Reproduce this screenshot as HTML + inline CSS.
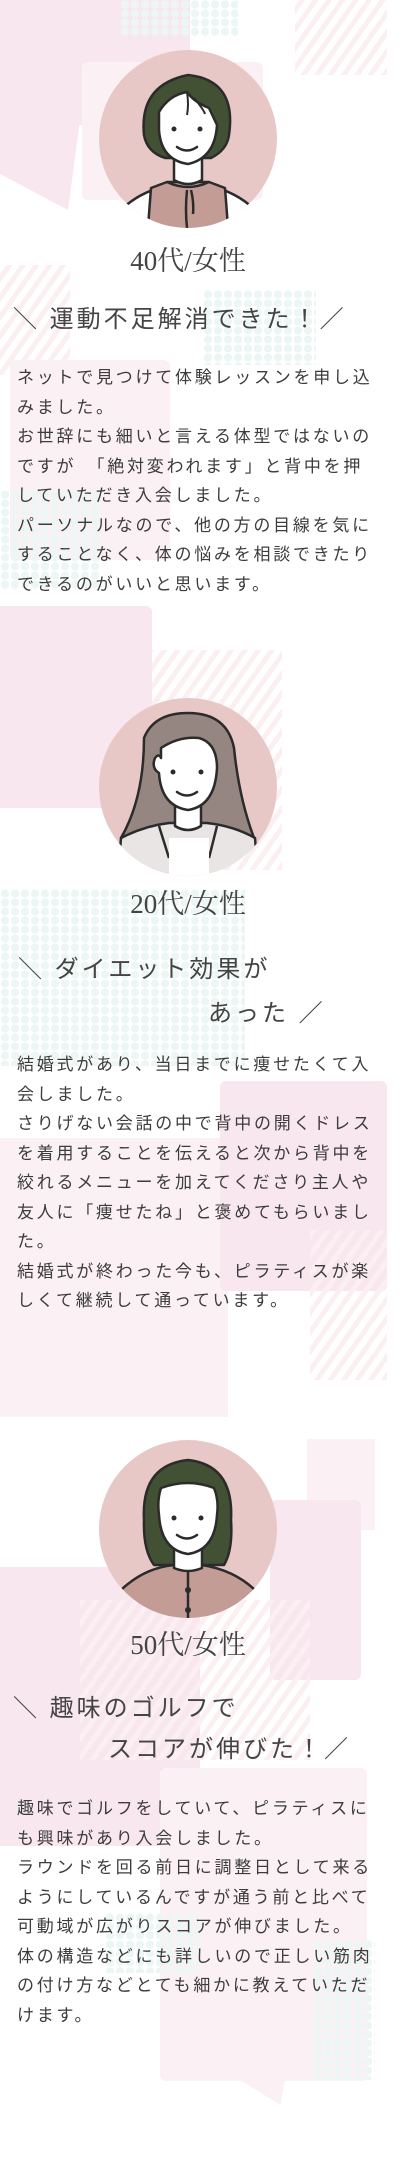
<!DOCTYPE html>
<html lang="ja"><head><meta charset="utf-8">
<style>
html,body{margin:0;padding:0}
body{width:403px;height:2167px;position:relative;overflow:hidden;background:#fff;font-family:"Liberation Sans","Noto Sans CJK JP",sans-serif;color:#444}
.bg{position:absolute}
.pk{background:#f8e7ee}
.pl{background:#fbf0f3}
.dots{background-image:radial-gradient(circle,#ecf7f5 60%,transparent 62%);background-size:10px 9px}
.stripes{background:repeating-linear-gradient(-55deg,#fbeff2 0 5px,transparent 5px 11px)}
.av{position:absolute;left:99px;width:178px;height:178px}
.lab{position:absolute;left:0;width:376px;text-align:center;font-family:"Liberation Serif","Noto Serif CJK JP",serif;font-size:27px;color:#444;line-height:30px}
.h{position:absolute;font-size:24px;letter-spacing:3px;line-height:30px;color:#444;white-space:nowrap}
.b{position:absolute;left:17px;width:362px;font-size:17px;letter-spacing:2.75px;line-height:29.5px;color:#3c3c3c}
</style></head><body>
<div class="bg pk" style="left:0;top:0;width:190px;height:125px"></div>
<div class="bg pk" style="left:0;top:120px;width:80px;height:90px;clip-path:polygon(0 0,100% 0,85% 100%,0 60%)"></div>
<div class="bg dots" style="left:120px;top:0;width:118px;height:37px"></div>
<div class="bg stripes" style="left:295px;top:0;width:92px;height:75px"></div>
<div class="bg pl" style="left:82px;top:62px;width:181px;height:138px;border-radius:6px"></div>
<div class="bg dots" style="left:203px;top:290px;width:113px;height:75px"></div>
<div class="bg stripes" style="left:0;top:265px;width:70px;height:110px"></div>
<div class="bg pl" style="left:10px;top:360px;width:160px;height:200px;border-radius:6px"></div>
<div class="bg dots" style="left:0;top:490px;width:100px;height:100px"></div>
<div class="bg pk" style="left:0;top:606px;width:152px;height:202px;border-radius:0 6px 0 0"></div>
<div class="bg stripes" style="left:152px;top:650px;width:130px;height:220px"></div>
<div class="bg dots" style="left:0;top:889px;width:245px;height:177px"></div>
<div class="bg pl" style="left:0;top:1138px;width:228px;height:279px"></div>
<div class="bg pk" style="left:220px;top:1081px;width:167px;height:210px;border-radius:6px"></div>
<div class="bg stripes" style="left:310px;top:1230px;width:77px;height:150px"></div>
<div class="bg pl" style="left:307px;top:1439px;width:68px;height:91px"></div>
<div class="bg pk" style="left:270px;top:1500px;width:91px;height:180px;border-radius:6px"></div>
<div class="bg pk" style="left:0;top:1567px;width:200px;height:279px"></div>
<div class="bg stripes" style="left:80px;top:1600px;width:230px;height:160px"></div>
<div class="bg pl" style="left:160px;top:1768px;width:207px;height:313px;border-radius:6px"></div>
<div class="bg pl" style="left:240px;top:2080px;width:45px;height:25px;clip-path:polygon(0 0,100% 0,90% 100%)"></div>
<div class="bg dots" style="left:313px;top:1940px;width:62px;height:140px"></div>
<div class="bg dots" style="left:105px;top:1913px;width:95px;height:60px"></div>

<svg class="av" style="top:50px" viewBox="0 0 178 178">
<defs><clipPath id="c1"><circle cx="89" cy="89" r="89"/></clipPath></defs>
<circle cx="89" cy="89" r="89" fill="#e8c8c6"/>
<g clip-path="url(#c1)" stroke="#2b2b2b" stroke-width="2.5" stroke-linejoin="round">
<path d="M22 160 Q40 142 70 135 L108 135 Q138 142 156 160 L160 190 L18 190Z" fill="#fff"/>
<path d="M52 138 L68 132 L110 132 L126 138 L130 190 L48 190Z" fill="#c29c95"/>
<path d="M68 132 Q89 142 110 132" fill="none"/>
<path d="M88 140 Q86 160 88 178 M92 140 Q95 152 94 164" fill="none"/>
<path d="M75 104 L75 130 Q89 138 103 130 L103 104Z" fill="#fff"/>
<path d="M45 85 Q40 35 89 25 Q138 30 130 85 Q128 100 112 108 L66 108 Q48 102 45 85Z" fill="#425033"/>
<path d="M60 62 Q70 45 88 42 Q95 52 110 58 L118 75 Q116 108 89 114 Q62 110 60 80Z" fill="#fff"/>
<path d="M88 42 Q90 55 88 65 M95 48 Q105 60 106 64" fill="none" stroke-width="2"/>
</g>
<circle cx="75" cy="79" r="2.5" fill="#2b2b2b"/><circle cx="101" cy="79" r="2.5" fill="#2b2b2b"/>
<path d="M78 97 Q88 104 98 97" fill="none" stroke="#2b2b2b" stroke-width="2.5" stroke-linecap="round"/>
</svg>
<div class="lab" style="top:246px">40代/女性</div>
<div class="h" style="left:13px;top:305px">＼ 運動不足解消できた！／</div>
<div class="b" style="top:363px">ネットで見つけて体験レッスンを申し込みました。<br>お世辞にも細いと言える体型ではないのですが　「絶対変われます」と背中を押していただき入会しました。<br>パーソナルなので、他の方の目線を気にすることなく、体の悩みを相談できたりできるのがいいと思います。</div>

<svg class="av" style="top:698px" viewBox="0 0 178 178">
<defs><clipPath id="c2"><circle cx="89" cy="89" r="89"/></clipPath></defs>
<circle cx="89" cy="89" r="89" fill="#e8c8c6"/>
<g clip-path="url(#c2)" stroke="#2b2b2b" stroke-width="2.5" stroke-linejoin="round">
<path d="M45 40 Q55 15 89 15 Q128 15 135 50 Q140 100 155 140 L130 150 L50 150 L22 140 Q45 100 45 40Z" fill="#958682"/>
<path d="M22 140 Q45 128 70 125 L108 125 Q135 128 156 140 L160 190 L18 190Z" fill="#e8e5e4"/>
<path d="M60 128 L70 160 M118 128 L110 160" fill="none"/>
<path d="M70 140 L110 140 L110 190 L70 190Z" fill="#fff" stroke="none"/>
<path d="M76 100 L76 128 Q89 136 102 128 L102 100Z" fill="#fff"/>
<path d="M62 50 Q80 38 100 40 Q118 45 118 70 Q116 108 89 112 Q62 108 60 75 Q52 70 56 60 Q60 55 62 60Z" fill="#fff"/>
</g>
<circle cx="74" cy="74" r="2.5" fill="#2b2b2b"/><circle cx="102" cy="74" r="2.5" fill="#2b2b2b"/>
<path d="M78 94 Q88 101 98 94" fill="none" stroke="#2b2b2b" stroke-width="2.5" stroke-linecap="round"/>
</svg>
<div class="lab" style="top:889px">20代/女性</div>
<div class="h" style="left:18px;top:955px">＼ ダイエット効果が</div>
<div class="h" style="left:208px;top:999px">あった ／</div>
<div class="b" style="top:1050px">結婚式があり、当日までに痩せたくて入会しました。<br>さりげない会話の中で背中の開くドレスを着用することを伝えると次から背中を絞れるメニューを加えてくださり主人や友人に「痩せたね」と褒めてもらいました。<br>結婚式が終わった今も、ピラティスが楽しくて継続して通っています。</div>

<svg class="av" style="top:1440px" viewBox="0 0 178 178">
<defs><clipPath id="c3"><circle cx="89" cy="89" r="89"/></clipPath></defs>
<circle cx="89" cy="89" r="89" fill="#e8c8c6"/>
<g clip-path="url(#c3)" stroke="#2b2b2b" stroke-width="2.5" stroke-linejoin="round">
<path d="M45 80 Q42 25 89 20 Q135 25 132 80 Q134 110 125 125 L55 125 Q44 110 45 80Z" fill="#425033"/>
<path d="M22 150 Q45 128 75 125 L103 125 Q135 130 156 150 L160 190 L18 190Z" fill="#c29c95"/>
<path d="M89 128 L89 190" fill="none"/>
<path d="M75 102 L75 128 Q89 134 103 128 L103 102Z" fill="#fff"/>
<path d="M62 48 Q89 38 115 48 Q120 60 118 75 Q116 110 89 114 Q62 110 60 75 Q58 60 62 48Z" fill="#fff"/>
</g>
<circle cx="89" cy="150" r="3" fill="#2b2b2b"/><circle cx="89" cy="170" r="3" fill="#2b2b2b"/>
<circle cx="75" cy="78" r="2.5" fill="#2b2b2b"/><circle cx="102" cy="78" r="2.5" fill="#2b2b2b"/>
<path d="M78 95 Q88 102 98 95" fill="none" stroke="#2b2b2b" stroke-width="2.5" stroke-linecap="round"/>
</svg>
<div class="lab" style="top:1630px">50代/女性</div>
<div class="h" style="left:13px;top:1694px">＼ 趣味のゴルフで</div>
<div class="h" style="left:108px;top:1735px">スコアが伸びた！／</div>
<div class="b" style="top:1794px">趣味でゴルフをしていて、ピラティスにも興味があり入会しました。<br>ラウンドを回る前日に調整日として来るようにしているんですが通う前と比べて可動域が広がりスコアが伸びました。<br>体の構造などにも詳しいので正しい筋肉の付け方などとても細かに教えていただけます。</div>
</body></html>
